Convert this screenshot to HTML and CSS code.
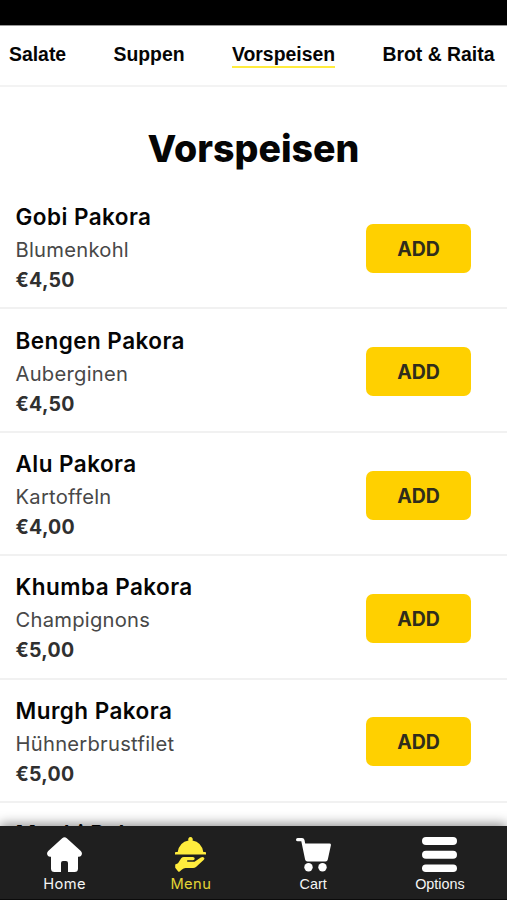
FILE: index.html
```html
<!DOCTYPE html>
<html lang="de">
<head>
<meta charset="utf-8">
<title>Vorspeisen</title>
<link rel="stylesheet" href="styles.css">
</head>
<body>
<div class="app">
  <div class="status"></div>
  <nav class="categories">
    <a>Salate</a><a>Suppen</a><a class="active">Vorspeisen</a><a>Brot &amp; Raita</a>
  </nav>
  <main class="menu">
    <h1>Vorspeisen</h1>
    <article class="dish"><div><h2>Gobi Pakora</h2><p class="desc">Blumenkohl</p><p class="price">€4,50</p></div><button>ADD</button></article>
    <article class="dish"><div><h2>Bengen Pakora</h2><p class="desc">Auberginen</p><p class="price">€4,50</p></div><button>ADD</button></article>
    <article class="dish"><div><h2>Alu Pakora</h2><p class="desc">Kartoffeln</p><p class="price">€4,00</p></div><button>ADD</button></article>
    <article class="dish"><div><h2>Khumba Pakora</h2><p class="desc">Champignons</p><p class="price">€5,00</p></div><button>ADD</button></article>
    <article class="dish"><div><h2>Murgh Pakora</h2><p class="desc">Hühnerbrustfilet</p><p class="price">€5,00</p></div><button>ADD</button></article>
    <article class="dish"><div><h2>Machi Pakora</h2></div></article>
  </main>
  <nav class="tabs">
    <a class="tab home"><svg viewBox="0 0 35 35"><path d="M15.200 1.200Q17.500-.8 19.800 1.200L33.800 14Q35.800 16.300 34.300 18.500Q33.200 20 31 19.700V31.500Q31 35 27.500 35H21V26Q21 24 19 24H16Q14 24 14 26V35H7.500Q4 35 4 31.500V19.700Q1.800 20 .7 18.500Q-.8 16.300 1.200 14Z"/></svg><span>Home</span></a>
    <a class="tab current"><svg viewBox="0 0 35 35"><path d="M15.500 3.500A2.300 2.300 0 1 1 19.500 3.500Q28.500 5 30.300 15H32.200Q33 15 33 16V17.500H2V16Q2 15 2.800 15H4.700Q6.500 5 15.500 3.500Z"/><path d="M2.200 27.500L5 26.300L8.200 21.300Q9.200 20 11 20H19.800Q21.700 20 21.700 21.500T20 23.200H14.200V24.800H21.500L27.800 20.600Q29.500 19.500 30.800 20.500T30.600 23L23 30Q21.800 31 20 31H12.500Q10.500 31 9 32.500L6.700 34.500Q5.800 35.200 5 34.300L2.200 30.800Z"/></svg><span>Menu</span></a>
    <a class="tab cart"><svg viewBox="0 0 35 35"><path d="M1.700 1H6Q8 1 8.500 3L9.200 6.500H33.500Q35.200 6.500 34.900 8.200L31.800 22.500Q31.400 24.500 29.500 24.500H11.500Q9.500 24.500 9.100 22.500L5.300 4.300H1.700Q0 4.300 0 2.700T1.700 1Z"/><circle cx="12.500" cy="30.300" r="4.200"/><circle cx="26.500" cy="30.300" r="4.200"/></svg><span>Cart</span></a>
    <a class="tab"><svg viewBox="0 0 35 35"><rect width="35" height="8" rx="4"/><rect y="13.700" width="35" height="8" rx="4"/><rect y="27.400" width="35" height="7.600" rx="3.800"/></svg><span>Options</span></a>
  </nav>
</div>
</body>
</html>
```
FILE: styles.css
```css
* { box-sizing: border-box; margin: 0; padding: 0; }
body { background: #fff; color: #050505; font-family: Inter, sans-serif; }
.app { height: 900px; display: flex; flex-direction: column; overflow: hidden; }
.status { flex: none; height: 25px; background: #000; }
.categories {
  flex: none; height: 62px; padding: 17px 12.500px 0 9px;
  display: flex; justify-content: space-between; align-items: flex-start;
  border-top: 1px solid #999; border-bottom: 2px solid #f3f3f3;
  font: bold 19.400px/22px "Liberation Sans", sans-serif; white-space: nowrap;
}
.active { padding-bottom: 1px; border-bottom: 2.500px solid #ffec3d; }
.menu { flex: 1; min-height: 0; overflow: hidden; }
h1 { height: 99px; padding-top: 37px; text-align: center; font-size: 37.500px; line-height: 49px; font-weight: 800; letter-spacing: 0; }
.dish {
  height: 123.400px; padding: 15.300px 36px 0 15.500px;
  display: flex; justify-content: space-between; align-items: flex-start;
  border-bottom: 2px solid #f1f1f1;
}
h2 { font-size: 22.500px; line-height: 32px; font-weight: 630; letter-spacing: 0.450px; }
.desc { font-size: 20.200px; line-height: 33px; color: #484848; letter-spacing: 0.250px; }
.price { font-size: 19.500px; line-height: 29px; font-weight: 750; color: #303030; letter-spacing: 0.250px; }
button {
  width: 105px; height: 49px; margin-top: 22.500px; padding-top: 1px; border: 0; border-radius: 7px;
  background: #ffd000; color: #302d1c; font: 700 19.500px Inter, sans-serif;
}
.tabs {
  flex: none; height: 74px; padding: 11px 0 0 1px; position: relative;
  display: flex; justify-content: space-around; align-items: flex-start;
  background: #1f1f1f; border-bottom: 1px solid #0b0b0b;
  box-shadow: 0 -2px 11px rgba(0,0,0,.45);
}
.tab { display: flex; flex-direction: column; align-items: center; color: #f5f5f5; font: 14.400px/24px "Liberation Sans", sans-serif; }
.tab svg { width: 35px; height: 35px; fill: #fff; }
.home, .current { font-family: Inter, sans-serif; font-size: 14.700px; letter-spacing: 0.400px; }
.current { color: #ffec3d; }
.current svg { fill: #ffec3d; }
.current span { color: #e3d436; }
```
